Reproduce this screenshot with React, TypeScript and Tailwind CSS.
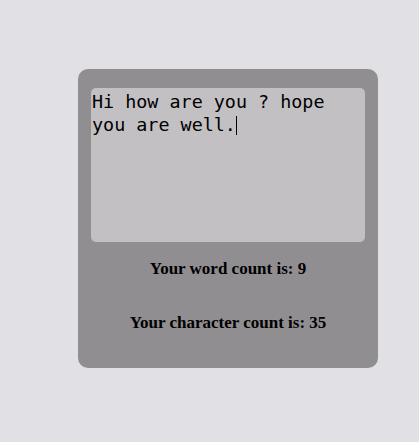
export default function App() {
  return (
    <div className="w-[419px] h-[442px] bg-[#e1e0e5] relative overflow-hidden">
      <div className="absolute left-[78px] top-[69px] w-[300px] h-[299px] rounded-[10px] bg-[#908e91] flex flex-col px-[13px] pt-[19px]">
        <div
          className="h-[154px] w-full rounded-[5px] bg-[#c2c0c3] text-black px-[1px] pt-[2px] text-[18.4px] leading-[23px] break-words"
          style={{ fontFamily: '"DejaVu Sans Mono", "Liberation Mono", monospace' }}
        >
          Hi how are you ? hope you are well.
          <span className="inline-block w-[1px] h-[19px] bg-black align-[-4px]" />
        </div>
        <div
          className="flex flex-col items-center text-black font-bold text-[17px] leading-[20px]"
          style={{ fontFamily: '"Liberation Serif", serif' }}
        >
          <div className="mt-[17px]">Your word count is: 9</div>
          <div className="mt-[34px]">Your character count is: 35</div>
        </div>
      </div>
    </div>
  );
}
